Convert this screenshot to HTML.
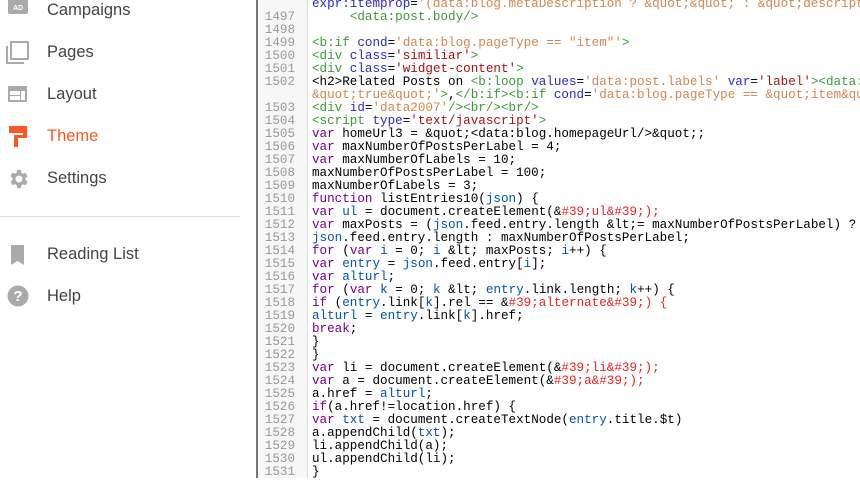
<!DOCTYPE html>
<html><head><meta charset="utf-8"><style>
*{margin:0;padding:0;box-sizing:border-box}
body{width:860px;height:478px;overflow:hidden;background:#fff;position:relative;font-family:"Liberation Sans",sans-serif}
.nav{position:absolute;left:0;top:0;width:240px;height:478px}
.it{position:absolute;left:0;height:30px;width:240px}
.it span{position:absolute;left:47px;top:0;font-size:16.5px;color:#444;line-height:20px}
.it svg{position:absolute;left:6px;top:-1px}
.div{position:absolute;left:0;top:216px;width:240px;height:1px;background:#e0e0e0}
.ed{position:absolute;left:256px;top:0;width:604px;height:478px;border-left:2px solid #777}
.gut{position:absolute;left:0;top:0;width:50px;height:478px;background:#f7f7f7;border-right:1px solid #ddd}
.code{position:absolute;left:0;top:-2px;font-family:"Liberation Mono",monospace;font-size:12.6px;line-height:13px;white-space:pre}
.ln{position:absolute;left:0;width:37px;text-align:right;color:#999}
.tx{position:absolute;left:54px;color:#000}
.t{color:#3a9a3a}.a{color:#2a2ac8}.s{color:#d2874e}.r{color:#a11}.k{color:#708}.v{color:#05a}.e{color:#e22}
</style></head><body>
<div class="nav">
<div class="it" style="top:0"><svg width="24" height="20" viewBox="0 0 24 20"><rect x="2" y="-2" width="20" height="17" rx="2" fill="#aaa"/><text x="12" y="11" font-size="7" font-family="Liberation Sans" font-weight="bold" fill="#fff" text-anchor="middle">AD</text></svg><span>Campaigns</span></div>
<div class="it" style="top:42px"><svg width="24" height="24" viewBox="0 0 24 24"><path d="M1 5v17h17" fill="none" stroke="#aaa" stroke-width="2"/><rect x="5" y="1" width="17" height="17" fill="none" stroke="#aaa" stroke-width="2"/></svg><span>Pages</span></div>
<div class="it" style="top:84px"><svg width="24" height="22" viewBox="0 0 24 22"><rect x="2" y="3" width="19" height="16" rx="1" fill="#aaa"/><rect x="4" y="8" width="10" height="4" fill="#fff"/><rect x="4" y="13" width="10" height="4" fill="#fff"/><rect x="15" y="8" width="4" height="9" fill="#fff"/></svg><span>Layout</span></div>
<div class="it" style="top:126px"><svg width="24" height="24" viewBox="0 0 24 24"><rect x="3" y="1" width="17" height="7" fill="#ff5722"/><rect x="17" y="1" width="4" height="12" fill="#ff5722"/><rect x="8" y="10" width="13" height="3" fill="#ff5722"/><rect x="8" y="10" width="4" height="12" fill="#ff5722"/></svg><span style="color:#ff5722">Theme</span></div>
<div class="it" style="top:168px"><svg width="24" height="24" viewBox="0 0 24 24"><path d="M19.4 13a7.5 7.5 0 000-2l2.1-1.6-2-3.5-2.5 1a7 7 0 00-1.7-1L15 3h-4l-.4 2.7a7 7 0 00-1.7 1l-2.5-1-2 3.5L6.6 11a7.5 7.5 0 000 2l-2.1 1.6 2 3.5 2.5-1a7 7 0 001.7 1L11 21h4l.4-2.7a7 7 0 001.7-1l2.5 1 2-3.5zM13 15.5a3.5 3.5 0 110-7 3.5 3.5 0 010 7z" fill="#aaa"/></svg><span>Settings</span></div>
<div class="div"></div>
<div class="it" style="top:244px"><svg width="24" height="24" viewBox="0 0 24 24"><path d="M5 2h13v20l-6.5-4L5 22z" fill="#aaa"/></svg><span>Reading List</span></div>
<div class="it" style="top:286px"><svg width="26" height="24" viewBox="0 0 26 24"><circle cx="12" cy="11" r="10.5" fill="#aaa"/><text x="12" y="16" font-size="15" font-weight="bold" font-family="Liberation Sans" fill="#fff" text-anchor="middle">?</text></svg><span>Help</span></div>
</div>
<div class="ed"><div class="gut"></div>
<div class="code">
<div class="tx" style="top:0"><span class="a">expr:itemprop</span>=<span class="s">'(data:blog.metaDescription ? &amp;quot;&amp;quot; : &amp;quot;descript</span></div>
<div class="ln" style="top:13px">1497</div><div class="tx" style="top:13px">     <span class="t">&lt;data:post.body/&gt;</span></div>
<div class="ln" style="top:26px">1498</div>
<div class="ln" style="top:39px">1499</div><div class="tx" style="top:39px"><span class="t">&lt;b:if</span> <span class="a">cond</span>=<span class="s">'data:blog.pageType == "item"'</span><span class="t">&gt;</span></div>
<div class="ln" style="top:52px">1500</div><div class="tx" style="top:52px"><span class="t">&lt;div</span> <span class="a">class</span>=<span class="r">'similiar'</span><span class="t">&gt;</span></div>
<div class="ln" style="top:65px">1501</div><div class="tx" style="top:65px"><span class="t">&lt;div</span> <span class="a">class</span>=<span class="r">'widget-content'</span><span class="t">&gt;</span></div>
<div class="ln" style="top:78px">1502</div><div class="tx" style="top:78px">&lt;h2&gt;Related Posts on <span class="t">&lt;b:loop</span> <span class="a">values</span>=<span class="s">'data:post.labels'</span> <span class="a">var</span>=<span class="r">'label'</span><span class="t">&gt;&lt;data:</span></div>
<div class="tx" style="top:91px"><span class="s">&amp;quot;true&amp;quot;'</span><span class="t">&gt;</span>,<span class="t">&lt;/b:if&gt;&lt;b:if</span> <span class="a">cond</span>=<span class="s">'data:blog.pageType == &amp;quot;item&amp;qu</span></div>
<div class="ln" style="top:104px">1503</div><div class="tx" style="top:104px"><span class="t">&lt;div</span> <span class="a">id</span>=<span class="s">'data2007'</span><span class="t">/&gt;&lt;br/&gt;&lt;br/&gt;</span></div>
<div class="ln" style="top:117px">1504</div><div class="tx" style="top:117px"><span class="t">&lt;script</span> <span class="a">type</span>=<span class="r">'text/javascript'</span><span class="t">&gt;</span></div>
<div class="ln" style="top:130px">1505</div><div class="tx" style="top:130px"><span class="k">var</span> homeUrl3 = &amp;quot;&lt;data:blog.homepageUrl/&gt;&amp;quot;;</div>
<div class="ln" style="top:143px">1506</div><div class="tx" style="top:143px"><span class="k">var</span> maxNumberOfPostsPerLabel = 4;</div>
<div class="ln" style="top:156px">1507</div><div class="tx" style="top:156px"><span class="k">var</span> maxNumberOfLabels = 10;</div>
<div class="ln" style="top:169px">1508</div><div class="tx" style="top:169px">maxNumberOfPostsPerLabel = 100;</div>
<div class="ln" style="top:182px">1509</div><div class="tx" style="top:182px">maxNumberOfLabels = 3;</div>
<div class="ln" style="top:195px">1510</div><div class="tx" style="top:195px"><span class="k">function</span> listEntries10(<span class="v">json</span>) {</div>
<div class="ln" style="top:208px">1511</div><div class="tx" style="top:208px"><span class="k">var</span> <span class="v">ul</span> = document.createElement(&amp;<span class="e">#39;ul&amp;#39;);</span></div>
<div class="ln" style="top:221px">1512</div><div class="tx" style="top:221px"><span class="k">var</span> maxPosts = (<span class="v">json</span>.feed.entry.length &amp;lt;= maxNumberOfPostsPerLabel) ?</div>
<div class="ln" style="top:234px">1513</div><div class="tx" style="top:234px"><span class="v">json</span>.feed.entry.length : maxNumberOfPostsPerLabel;</div>
<div class="ln" style="top:247px">1514</div><div class="tx" style="top:247px"><span class="k">for</span> (<span class="k">var</span> <span class="v">i</span> = 0; <span class="v">i</span> &amp;lt; maxPosts; <span class="v">i</span>++) {</div>
<div class="ln" style="top:260px">1515</div><div class="tx" style="top:260px"><span class="k">var</span> <span class="v">entry</span> = <span class="v">json</span>.feed.entry[<span class="v">i</span>];</div>
<div class="ln" style="top:273px">1516</div><div class="tx" style="top:273px"><span class="k">var</span> <span class="v">alturl</span>;</div>
<div class="ln" style="top:286px">1517</div><div class="tx" style="top:286px"><span class="k">for</span> (<span class="k">var</span> <span class="v">k</span> = 0; <span class="v">k</span> &amp;lt; <span class="v">entry</span>.link.length; <span class="v">k</span>++) {</div>
<div class="ln" style="top:299px">1518</div><div class="tx" style="top:299px"><span class="k">if</span> (<span class="v">entry</span>.link[<span class="v">k</span>].rel == &amp;<span class="e">#39;alternate&amp;#39;) {</span></div>
<div class="ln" style="top:312px">1519</div><div class="tx" style="top:312px"><span class="v">alturl</span> = <span class="v">entry</span>.link[<span class="v">k</span>].href;</div>
<div class="ln" style="top:325px">1520</div><div class="tx" style="top:325px"><span class="k">break</span>;</div>
<div class="ln" style="top:338px">1521</div><div class="tx" style="top:338px">}</div>
<div class="ln" style="top:351px">1522</div><div class="tx" style="top:351px">}</div>
<div class="ln" style="top:364px">1523</div><div class="tx" style="top:364px"><span class="k">var</span> li = document.createElement(&amp;<span class="e">#39;li&amp;#39;);</span></div>
<div class="ln" style="top:377px">1524</div><div class="tx" style="top:377px"><span class="k">var</span> a = document.createElement(&amp;<span class="e">#39;a&amp;#39;);</span></div>
<div class="ln" style="top:390px">1525</div><div class="tx" style="top:390px">a.href = <span class="v">alturl</span>;</div>
<div class="ln" style="top:403px">1526</div><div class="tx" style="top:403px"><span class="k">if</span>(a.href!=location.href) {</div>
<div class="ln" style="top:416px">1527</div><div class="tx" style="top:416px"><span class="k">var</span> <span class="v">txt</span> = document.createTextNode(<span class="v">entry</span>.title.$t)</div>
<div class="ln" style="top:429px">1528</div><div class="tx" style="top:429px">a.appendChild(<span class="v">txt</span>);</div>
<div class="ln" style="top:442px">1529</div><div class="tx" style="top:442px">li.appendChild(a);</div>
<div class="ln" style="top:455px">1530</div><div class="tx" style="top:455px">ul.appendChild(li);</div>
<div class="ln" style="top:468px">1531</div><div class="tx" style="top:468px">}</div>
</div></div>
</body></html>
